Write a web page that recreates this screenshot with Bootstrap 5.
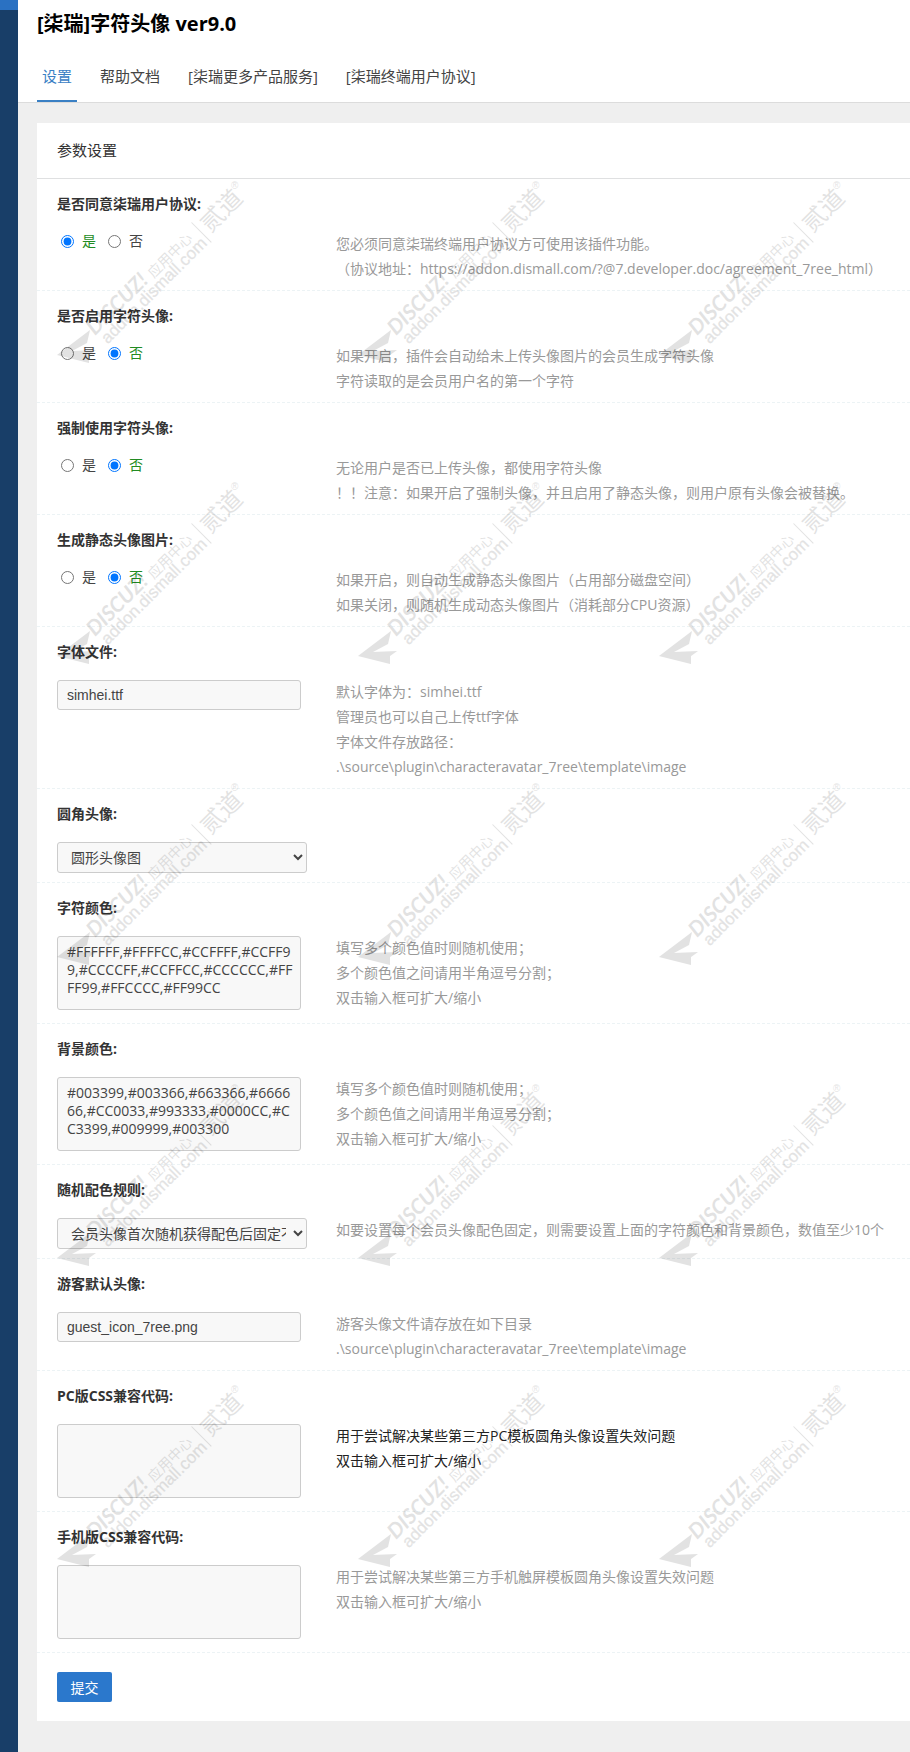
<!DOCTYPE html>
<html lang="zh-CN">
<head>
<meta charset="utf-8">
<meta name="viewport" content="width=device-width, initial-scale=1">
<title>[柒瑞]字符头像 ver9.0</title>
<link href="https://cdn.jsdelivr.net/npm/bootstrap@5.3.0/dist/css/bootstrap.min.css" rel="stylesheet">
<style>
  :root { --ui-font: "Open Sans", "Noto Sans CJK SC", sans-serif; }
  body { font-family: var(--ui-font); font-size: 14px; line-height: 25px; color: #333; background: #efefef; }
  .side-strip { width: 18px; background: #183e68; border-top: 10px solid #2a71c2; }
  .page-head { border-bottom: 1px solid #dcdcdc; padding-left: 19px; }
  .page-title { font-size: 20px; line-height: 24px; padding: 12px 0 15px; color: #000; }
  .page-tabs { gap: 18px; }
  .page-tabs .nav-link { font-size: 15px; line-height: 24px; padding: 13px 5px 12px; color: #444; border-bottom: 2px solid transparent; border-radius: 0; }
  .page-tabs .nav-link.active { color: #3a80c4; border-bottom-color: #3a80c4; }
  .page-main { padding: 20px 0 31px 19px; }
  .panel-title { font-size: 15px; line-height: 24px; padding: 15px 20px 16px; color: #333; border-bottom: 1px solid #dfe0e1; }
  .setting { padding: 0 0 9px 20px; border-bottom: 1px dashed #ecf3f5; }
  .setting.tall { padding-bottom: 13px; }
  .setting-name { display: block; float: none; width: auto; height: 52px; padding-top: 12px; font-size: 14px; line-height: 25px; font-weight: 700; color: #333; }
  .setting-field { width: 279px; flex: none; padding-top: 1px; }
  .setting-hint { color: #999; }
  .setting-hint.focused { color: #222; }
  .ctl { display: block; border: 1px solid #ccc; border-radius: 3px; background: #f8f8f8; color: #444; font-size: 14px; }
  .ctl-text { width: 244px; height: 30px; padding: 0 9px; font-family: "Liberation Sans", "Noto Sans CJK SC", sans-serif; }
  .ctl-area { width: 244px; height: 74px; padding: 6px 4px 4px 9px; line-height: 18px; word-break: break-all; resize: none; overflow: hidden; }
  .ctl-select { width: 250px; height: 31px; padding: 0 4px 0 9px; }
  .choices { padding: 0 0 0 4px; height: 18px; }
  .choices input { width: 13px; height: 13px; margin: 0 8px 0 0; }
  .choices label { line-height: 18px; margin-right: 12px; color: #444; }
  .choices input:checked + label { color: #228b22; }
  .panel-foot { padding: 19px 20px; }
  .btn-submit { --bs-btn-bg: #2b78cc; --bs-btn-color: #fff; --bs-btn-hover-bg: #2366b0; --bs-btn-hover-color: #fff; --bs-btn-border-width: 0; --bs-btn-border-radius: 2px; width: 55px; height: 30px; padding: 0; font-size: 14px; }
  .stamps { inset: 0; padding-left: 20px; pointer-events: none; display: grid; grid-auto-rows: 301px; overflow: hidden; justify-content: start; }
  .stamps svg { display: block; overflow: visible; fill: #000; opacity: .11; }
</style>
</head>
<body>
<div class="d-flex min-vh-100">
  <aside class="side-strip flex-shrink-0"></aside>
  <div class="flex-grow-1 overflow-hidden">
    <header class="page-head bg-white">
      <h1 class="page-title fw-bold m-0">[柒瑞]字符头像 ver9.0</h1>
      <nav class="nav page-tabs">
        <a class="nav-link active" href="#">设置</a>
        <a class="nav-link" href="#">帮助文档</a>
        <a class="nav-link" href="#">[柒瑞更多产品服务]</a>
        <a class="nav-link" href="#">[柒瑞终端用户协议]</a>
      </nav>
    </header>
    <main class="page-main">
      <form class="bg-white">
        <h2 class="panel-title m-0 fw-normal">参数设置</h2>
        <div class="position-relative" id="panel">
          <fieldset class="setting">
            <legend class="setting-name m-0">是否同意柒瑞用户协议:</legend>
            <div class="d-flex flex-column flex-md-row">
              <div class="setting-field"><div class="choices d-flex align-items-center">
                <input type="radio" name="agree" id="agree1" checked><label for="agree1">是</label>
                <input type="radio" name="agree" id="agree0"><label for="agree0">否</label>
              </div></div>
              <div class="setting-hint">您必须同意柒瑞终端用户协议方可使用该插件功能。<br>（协议地址：https://addon.dismall.com/?@7.developer.doc/agreement_7ree_html）</div>
            </div>
          </fieldset>
          <fieldset class="setting">
            <legend class="setting-name m-0">是否启用字符头像:</legend>
            <div class="d-flex flex-column flex-md-row">
              <div class="setting-field"><div class="choices d-flex align-items-center">
                <input type="radio" name="enable" id="enable1"><label for="enable1">是</label>
                <input type="radio" name="enable" id="enable0" checked><label for="enable0">否</label>
              </div></div>
              <div class="setting-hint">如果开启，插件会自动给未上传头像图片的会员生成字符头像<br>字符读取的是会员用户名的第一个字符</div>
            </div>
          </fieldset>
          <fieldset class="setting">
            <legend class="setting-name m-0">强制使用字符头像:</legend>
            <div class="d-flex flex-column flex-md-row">
              <div class="setting-field"><div class="choices d-flex align-items-center">
                <input type="radio" name="force" id="force1"><label for="force1">是</label>
                <input type="radio" name="force" id="force0" checked><label for="force0">否</label>
              </div></div>
              <div class="setting-hint">无论用户是否已上传头像，都使用字符头像<br>！！注意：如果开启了强制头像，并且启用了静态头像，则用户原有头像会被替换。</div>
            </div>
          </fieldset>
          <fieldset class="setting">
            <legend class="setting-name m-0">生成静态头像图片:</legend>
            <div class="d-flex flex-column flex-md-row">
              <div class="setting-field"><div class="choices d-flex align-items-center">
                <input type="radio" name="static" id="static1"><label for="static1">是</label>
                <input type="radio" name="static" id="static0" checked><label for="static0">否</label>
              </div></div>
              <div class="setting-hint">如果开启，则自动生成静态头像图片（占用部分磁盘空间）<br>如果关闭，则随机生成动态头像图片（消耗部分CPU资源）</div>
            </div>
          </fieldset>
          <div class="setting">
            <label class="setting-name" for="font">字体文件:</label>
            <div class="d-flex flex-column flex-md-row">
              <div class="setting-field"><input class="ctl ctl-text" type="text" id="font" value="simhei.ttf"></div>
              <div class="setting-hint">默认字体为：simhei.ttf<br>管理员也可以自己上传ttf字体<br>字体文件存放路径：<br>.\source\plugin\characteravatar_7ree\template\image</div>
            </div>
          </div>
          <div class="setting">
            <label class="setting-name" for="shape">圆角头像:</label>
            <div class="setting-field"><select class="ctl ctl-select" id="shape"><option>圆形头像图</option></select></div>
          </div>
          <div class="setting tall">
            <label class="setting-name" for="fg">字符颜色:</label>
            <div class="d-flex flex-column flex-md-row">
              <div class="setting-field"><textarea class="ctl ctl-area" id="fg" spellcheck="false">#FFFFFF,#FFFFCC,#CCFFFF,#CCFF99,#CCCCFF,#CCFFCC,#CCCCCC,#FFFF99,#FFCCCC,#FF99CC</textarea></div>
              <div class="setting-hint">填写多个颜色值时则随机使用；<br>多个颜色值之间请用半角逗号分割；<br>双击输入框可扩大/缩小</div>
            </div>
          </div>
          <div class="setting tall">
            <label class="setting-name" for="bg">背景颜色:</label>
            <div class="d-flex flex-column flex-md-row">
              <div class="setting-field"><textarea class="ctl ctl-area" id="bg" spellcheck="false">#003399,#003366,#663366,#666666,#CC0033,#993333,#0000CC,#CC3399,#009999,#003300</textarea></div>
              <div class="setting-hint">填写多个颜色值时则随机使用；<br>多个颜色值之间请用半角逗号分割；<br>双击输入框可扩大/缩小</div>
            </div>
          </div>
          <div class="setting">
            <label class="setting-name" for="rule">随机配色规则:</label>
            <div class="d-flex flex-column flex-md-row">
              <div class="setting-field"><select class="ctl ctl-select" id="rule"><option>会员头像首次随机获得配色后固定不变</option></select></div>
              <div class="setting-hint">如要设置每个会员头像配色固定，则需要设置上面的字符颜色和背景颜色，数值至少10个</div>
            </div>
          </div>
          <div class="setting">
            <label class="setting-name" for="guest">游客默认头像:</label>
            <div class="d-flex flex-column flex-md-row">
              <div class="setting-field"><input class="ctl ctl-text" type="text" id="guest" value="guest_icon_7ree.png"></div>
              <div class="setting-hint">游客头像文件请存放在如下目录<br>.\source\plugin\characteravatar_7ree\template\image</div>
            </div>
          </div>
          <div class="setting tall">
            <label class="setting-name" for="csspc">PC版CSS兼容代码:</label>
            <div class="d-flex flex-column flex-md-row">
              <div class="setting-field"><textarea class="ctl ctl-area" id="csspc"></textarea></div>
              <div class="setting-hint focused">用于尝试解决某些第三方PC模板圆角头像设置失效问题<br>双击输入框可扩大/缩小</div>
            </div>
          </div>
          <div class="setting tall">
            <label class="setting-name" for="cssm">手机版CSS兼容代码:</label>
            <div class="d-flex flex-column flex-md-row">
              <div class="setting-field"><textarea class="ctl ctl-area" id="cssm"></textarea></div>
              <div class="setting-hint">用于尝试解决某些第三方手机触屏模板圆角头像设置失效问题<br>双击输入框可扩大/缩小</div>
            </div>
          </div>
          <div class="panel-foot"><button class="btn btn-submit d-block" type="submit">提交</button></div>
          <div class="stamps position-absolute" id="stamps" aria-hidden="true"></div>
        </div>
      </form>
    </main>
  </div>
</div>
<template id="stamp">
  <svg width="190" height="190" viewBox="0 0 190 190">
    <path d="M0 176 33 151 30 164 15 172 39 171 32 176 32 184Z"/>
    <g transform="translate(38 157) rotate(-45)">
      <text font-family="Lato, sans-serif" font-style="italic" font-weight="700" font-size="21">DISCUZ!</text>
      <text x="82" y="1" font-family="Noto Sans CJK SC, sans-serif" font-size="14">应用中心</text>
      <text x="3" y="15" font-family="Liberation Sans, sans-serif" stroke="#000" stroke-width=".3" font-size="17">addon.dismall.com</text>
      <path d="M148-12h1v28h-1z"/>
      <text x="154" y="9" font-family="Noto Sans CJK SC, sans-serif" font-size="24">贰道</text>
    </g>
    <text x="174" y="10" font-family="Liberation Sans, sans-serif" font-size="10">®</text>
  </svg>
</template>
<script src="https://cdn.jsdelivr.net/npm/bootstrap@5.3.0/dist/js/bootstrap.bundle.min.js"></script>
<script>
  // Tile the watermark over the whole panel.
  const pitch = 301;
  const stamps = document.getElementById('stamps');
  const cols = Math.ceil((stamps.clientWidth - 20) / pitch);
  const rows = Math.floor(stamps.clientHeight / pitch);
  stamps.style.gridTemplateColumns = `repeat(${cols}, ${pitch}px)`;
  for (let i = 0; i < cols * rows; i++) {
    stamps.append(document.getElementById('stamp').content.cloneNode(true));
  }
</script>
</body>
</html>
